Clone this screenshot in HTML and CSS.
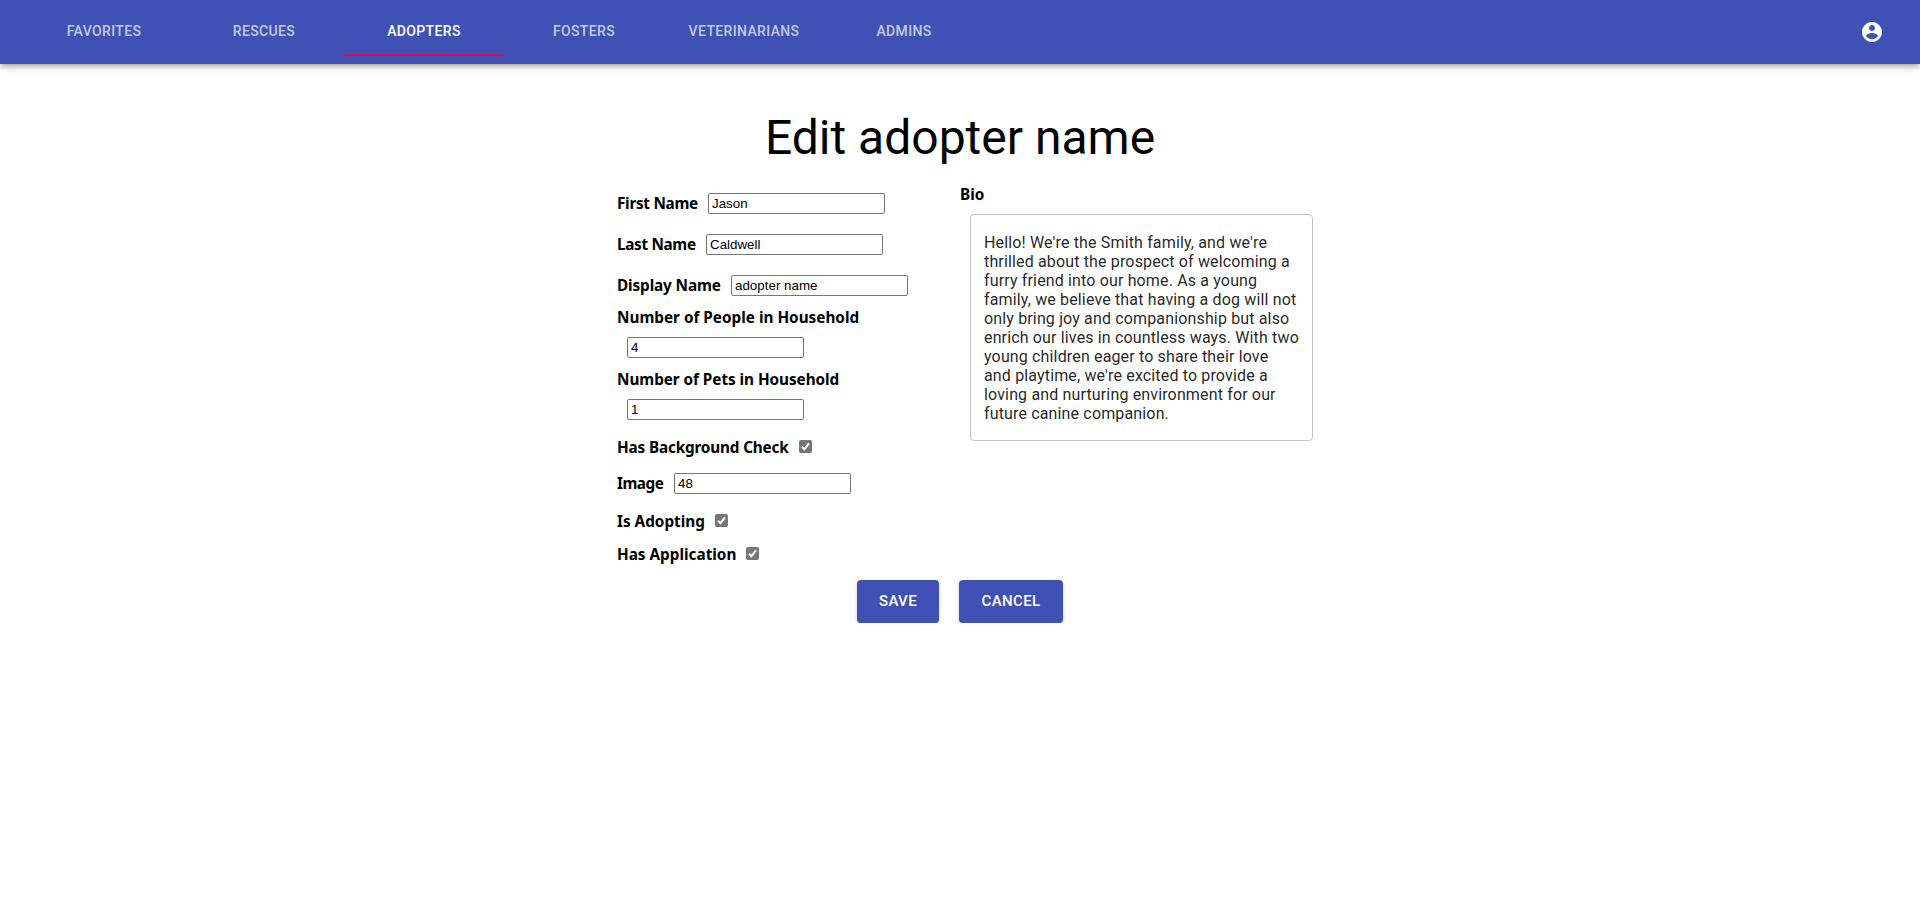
FILE: index.html
```html
<!DOCTYPE html>
<html lang="en">
<head>
<meta charset="utf-8">
<title>Edit adopter</title>
<link rel="stylesheet" href="styles.css">
</head>
<body>
<header class="app-bar">
  <nav class="tabs">
    <a class="tab">Favorites</a>
    <a class="tab">Rescues</a>
    <a class="tab tab-active">Adopters</a>
    <a class="tab">Fosters</a>
    <a class="tab">Veterinarians</a>
    <a class="tab">Admins</a>
  </nav>
  <svg class="account" viewBox="0 0 24 24" fill="currentColor"><path d="M12 2C6.480 2 2 6.480 2 12s4.480 10 10 10 10-4.480 10-10S17.520 2 12 2zm0 3c1.660 0 3 1.340 3 3s-1.340 3-3 3-3-1.340-3-3 1.340-3 3-3zm0 14.200c-2.500 0-4.710-1.280-6-3.220.030-1.990 4-3.080 6-3.080 1.990 0 5.970 1.090 6 3.080-1.290 1.940-3.500 3.220-6 3.220z"/></svg>
</header>
<main class="page">
  <h1 class="title">Edit adopter name</h1>
  <form class="form">
    <div class="fields">
      <div class="row"><label class="label first-name">First Name</label><input class="text" value="Jason"></div>
      <div class="row"><label class="label last-name">Last Name</label><input class="text" value="Caldwell"></div>
      <div class="row"><label class="label display-name">Display Name</label><input class="text text-wide" value="adopter name"></div>
      <div class="caption"><label class="label">Number of People in Household</label></div>
      <div class="row"><input class="text" value="4"></div>
      <div class="caption"><label class="label pets">Number of Pets in Household</label></div>
      <div class="row"><input class="text" value="1"></div>
      <div class="row row-check"><label class="label background">Has Background Check</label><span class="check"><svg viewBox="0 0 13 13"><path d="M3 6.800L5.400 9.200L10 3.300"/></svg></span></div>
      <div class="row"><label class="label image">Image</label><input class="text" value="48"></div>
      <div class="row row-check"><label class="label adopting">Is Adopting</label><span class="check"><svg viewBox="0 0 13 13"><path d="M3 6.800L5.400 9.200L10 3.300"/></svg></span></div>
      <div class="row row-check"><label class="label application">Has Application</label><span class="check"><svg viewBox="0 0 13 13"><path d="M3 6.800L5.400 9.200L10 3.300"/></svg></span></div>
    </div>
    <div class="bio">
      <div class="caption"><label class="label">Bio</label></div>
      <div class="bio-box">Hello! We're the Smith family, and we're<br>thrilled about the prospect of welcoming a<br>furry friend into our home. As a young<br>family, we believe that having a dog will not<br>only bring joy and companionship but also<br>enrich our lives in countless ways. With two<br>young children eager to share their love<br>and playtime, we're excited to provide a<br>loving and nurturing environment for our<br>future canine companion.</div>
    </div>
  </form>
  <div class="actions">
    <button class="button save">Save</button>
    <button class="button cancel">Cancel</button>
  </div>
</main>
</body>
</html>
```
FILE: styles.css
```css
* { box-sizing: border-box; }
body { margin: 0; background: #fff; color: #000; font-family: Roboto, sans-serif; }
.app-bar {
  display: flex; align-items: center; justify-content: space-between;
  height: 64px; padding: 0 36px 0 24px; background: #3f51b5; color: #fff;
  box-shadow: 0 2px 4px -1px rgba(0,0,0,.2), 0 4px 5px 0 rgba(0,0,0,.14), 0 1px 10px 0 rgba(0,0,0,.12);
}
.tabs { display: flex; height: 48px; }
.tab {
  display: flex; align-items: center; justify-content: center;
  width: 160px; border-bottom: 2px solid transparent;
  color: rgba(255,255,255,.7); font-size: 14px; font-weight: 500; letter-spacing: .35px; text-transform: uppercase;
}
.tab-active { color: #fff; border-bottom-color: #f50057; }
.account { width: 24px; height: 24px; }
.page { padding-top: 46px; }
.title { margin: 0 0 17px; font-size: 48px; font-weight: 400; line-height: 56px; text-align: center; }
.form { display: flex; width: 686px; margin: 0 auto; }
.fields { width: 343px; flex: none; }
.row { display: flex; align-items: center; height: 41px; }
.row-check { height: 33px; }
.caption { display: flex; align-items: center; height: 21px; padding-top: 2px; }
.label { font: 700 15.3px/21px "Noto Sans", "Open Sans", sans-serif; white-space: nowrap; }
.row-check .label { padding-top: 2px; }
.first-name { width: 81px; letter-spacing: -.28px; }
.last-name { width: 79px; letter-spacing: -.32px; }
.display-name { width: 104px; letter-spacing: -.12px; }
.pets { letter-spacing: -.05px; }
.background { width: 172px; letter-spacing: -.16px; }
.image { width: 47px; letter-spacing: -.5px; }
.adopting { width: 88px; }
.application { width: 119px; }
.text {
  width: 177px; height: 21px; margin: 0 0 0 10px; padding: 1px 3px;
  border: 1px solid #767676; border-radius: 2px; background: #fff; color: #000;
  font: 13.333px "Liberation Sans", Arial, sans-serif; outline: 0;
}
.check { width: 13px; height: 13px; margin-left: 10px; border-radius: 2px; background: #767676; }
.check svg { display: block; fill: none; stroke: #fff; stroke-width: 2; }
.bio { width: 353px; flex: none; }
.bio-box {
  width: 343px; height: 227px; margin: 10px 0 0 10px; padding: 17.5px 13px;
  border: 1px solid rgba(0,0,0,.23); border-radius: 4px; color: rgba(0,0,0,.87);
  font-size: 16px; line-height: 19px; letter-spacing: .15px; white-space: nowrap;
}
.actions { display: flex; justify-content: center; gap: 20px; padding-top: 10px; }
.button {
  height: 43px; padding: 0 0 2px; border: 0; border-radius: 4px; background: #3f51b5; color: #fff;
  font: 500 15px/26px Roboto, sans-serif; letter-spacing: .35px; text-transform: uppercase;
  box-shadow: 0 3px 1px -2px rgba(0,0,0,.2), 0 2px 2px 0 rgba(0,0,0,.14), 0 1px 5px 0 rgba(0,0,0,.12);
}
.save { width: 82px; }
.cancel { width: 104px; }
.text-wide { letter-spacing: .02px; }
```
